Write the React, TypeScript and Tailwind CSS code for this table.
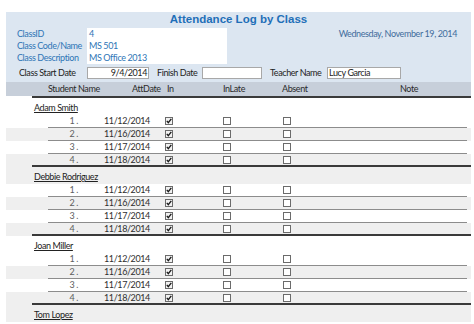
import React from "react";

const body = { fontFamily: "Lato, 'Open Sans', sans-serif" };

function Box({ checked }: { checked: boolean }) {
  return (
    <svg width="8" height="8" viewBox="0 0 8 8" className="block">
      <rect x="0.5" y="0.5" width="7" height="7" fill={checked ? "#f2f2f2" : "#ffffff"} stroke="#6b6b6b" strokeWidth="1" />
      {checked && <path d="M1.8 3.9 L3.3 5.6 L6.3 1.9" fill="none" stroke="#1a1a1a" strokeWidth="1.4" />}
    </svg>
  );
}

const dates = ["11/12/2014", "11/16/2014", "11/17/2014", "11/18/2014"];
const students = ["Adam Smith", "Debbie Rodriguez", "Joan Miller", "Tom Lopez"];

function DetailRow({ i }: { i: number }) {
  const isLast = i === 3;
  const grey = i % 2 === 1;
  return (
    <div className={grey ? "ml-[6px] w-[465px] h-[13px] bg-[#efefef]" : "ml-[6px] w-[465px] h-[13px] bg-white"}>
      <div
        className={
          isLast
            ? "ml-[26px] w-[439px] h-full border-b-2 border-[#3a3a3a] flex items-center"
            : "ml-[42px] w-[419px] h-full border-b border-[#8c8c8c] flex items-center"
        }
      >
        <div className={isLast ? "ml-[16px] flex items-center" : "ml-0 flex items-center"}>
          <span className="w-[30px] text-right text-[#5e5e5e] leading-[12px]">{i + 1} .</span>
          <span className="ml-[26px] w-[61px] text-[#2e2e2e] leading-[12px]">{dates[i]}</span>
          <span className="w-[58px] flex items-center">
            <Box checked={true} />
          </span>
          <span className="w-[60px] flex items-center">
            <Box checked={false} />
          </span>
          <span className="flex items-center">
            <Box checked={false} />
          </span>
        </div>
      </div>
    </div>
  );
}

function Group({ name, idx, full }: { name: string; idx: number; full: boolean }) {
  return (
    <div>
      <div className={idx % 2 === 1 ? "ml-[6px] w-[465px] h-[17px] bg-[#efefef] pl-[28px] pt-[4px]" : "ml-[6px] w-[465px] h-[17px] bg-white pl-[28px] pt-[4px]"}>
        <span className="underline text-[#222] leading-[12px] block">{name}</span>
      </div>
      {full && [0, 1, 2, 3].map((i) => <DetailRow key={i} i={i} />)}
    </div>
  );
}

export default function App() {
  return (
    <div className="w-[474px] h-[324px] overflow-hidden bg-white pt-[12px] text-[9px] tracking-[-0.4px] whitespace-nowrap" style={body}>
      <div className="ml-[6px] w-[465px] h-[70px] bg-[#dce6f1] flex flex-col">
        <div
          className="h-[16px] flex items-center justify-center text-[11.5px] font-bold text-[#1f6fb8] tracking-normal"
          style={{ fontFamily: "'Liberation Sans', Arial, sans-serif" }}
        >
          Attendance Log by Class
        </div>
        <div className="h-[36px] flex">
          <div className="w-[81px] pl-[11px] text-[#2e75b6] flex flex-col">
            <span className="h-[12px] leading-[12px]">ClassID</span>
            <span className="h-[12px] leading-[12px]">Class Code/Name</span>
            <span className="h-[12px] leading-[12px]">Class Description</span>
          </div>
          <div className="w-[140px] bg-white pl-[2px] text-[#2e75b6] flex flex-col">
            <span className="h-[12px] leading-[12px]">4</span>
            <span className="h-[12px] leading-[12px]">MS 501</span>
            <span className="h-[12px] leading-[12px]">MS Office 2013</span>
          </div>
          <div className="flex-1 text-right pr-[14px] text-[#3f6c9c] leading-[11px]">
            Wednesday, November 19, 2014
          </div>
        </div>
        <div className="h-[18px] flex items-center text-[#222]">
          <span className="pl-[13px] w-[81px]">Class Start Date</span>
          <span className="w-[62px] h-[12px] bg-white border border-[#a8a8a8] text-right pr-[1px] leading-[10px]">9/4/2014</span>
          <span className="ml-[8px] w-[45px]">Finish Date</span>
          <span className="w-[60px] h-[12px] bg-white border border-[#a8a8a8]"></span>
          <span className="ml-[8px] w-[57px]">Teacher Name</span>
          <span className="w-[74px] h-[12px] bg-white border border-[#a8a8a8] pl-[1px] leading-[10px]">Lucy Garcia</span>
        </div>
      </div>
      <div className="ml-[6px] w-[465px] h-[14px] bg-[#c7cfda] flex items-center pl-[42px] text-[#2a2a2a]">
        <span className="w-[84px]">Student Name</span>
        <span className="w-[35px]">AttDate</span>
        <span className="w-[56px]">In</span>
        <span className="w-[59px]">InLate</span>
        <span className="w-[118px]">Absent</span>
        <span>Note</span>
      </div>
      <div className="ml-[32px] w-[439px] h-[2px] bg-[#3a3a3a]"></div>
      {students.map((s, i) => (
        <Group key={s} name={s} idx={i} full={i < 3} />
      ))}
    </div>
  );
}
